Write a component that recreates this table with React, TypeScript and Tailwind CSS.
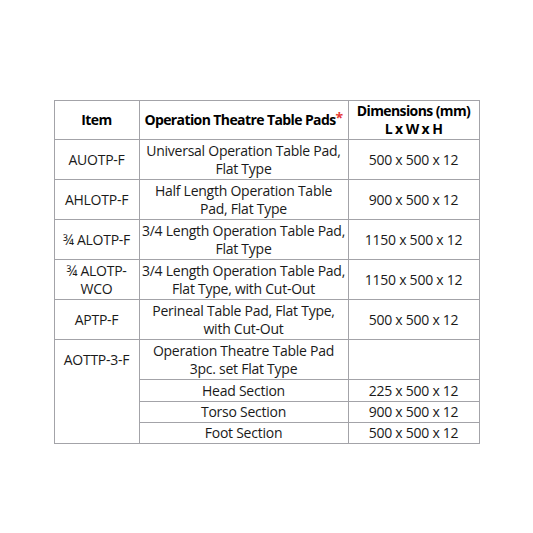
import React from 'react'

type Row = { item?: string; itemSpan?: number; desc: string[]; dim: string; h: number }

const rows: Row[] = [
  { item: 'AUOTP-F', desc: ['Universal Operation Table Pad,', 'Flat Type'], dim: '500 x 500 x 12', h: 40 },
  { item: 'AHLOTP-F', desc: ['Half Length Operation Table', 'Pad, Flat Type'], dim: '900 x 500 x 12', h: 40 },
  { item: '¾ ALOTP-F', desc: ['3/4 Length Operation Table Pad,', 'Flat Type'], dim: '1150 x 500 x 12', h: 40 },
  { item: '¾ ALOTP-\nWCO', desc: ['3/4 Length Operation Table Pad,', 'Flat Type, with Cut-Out'], dim: '1150 x 500 x 12', h: 40 },
  { item: 'APTP-F', desc: ['Perineal Table Pad, Flat Type,', 'with Cut-Out'], dim: '500 x 500 x 12', h: 40 },
  { item: 'AOTTP-3-F', itemSpan: 4, desc: ['Operation Theatre Table Pad', '3pc. set Flat Type'], dim: '', h: 40 },
  { desc: ['Head Section'], dim: '225 x 500 x 12', h: 22 },
  { desc: ['Torso Section'], dim: '900 x 500 x 12', h: 21 },
  { desc: ['Foot Section'], dim: '500 x 500 x 12', h: 21 },
]

const cell = 'border border-[#a3a3a8] text-center align-middle p-0 whitespace-nowrap'

export default function App() {
  return (
    <div className="min-h-[533px] w-[533px] bg-white pt-[100px] font-['Open_Sans',sans-serif] text-[#1a1a1a] tracking-[-0.25px]">
      <table className="mx-auto table-fixed border-collapse text-[14px] leading-[18px]">
        <colgroup>
          <col className="w-[85px]" />
          <col className="w-[209px]" />
          <col className="w-[131px]" />
        </colgroup>
        <thead>
          <tr className="h-[39px] font-bold text-black tracking-[-0.6px]">
            <th className={cell}>Item</th>
            <th className={cell}>
              Operation Theatre Table Pads<span className="relative -top-[2px] text-[#e53935]">*</span>
            </th>
            <th className={cell}>
              Dimensions (mm)
              <br />L x W x H
            </th>
          </tr>
        </thead>
        <tbody>
          {rows.map((r, i) => (
            <tr key={i} style={{ height: r.h }}>
              {r.item !== undefined && (
                <td
                  rowSpan={r.itemSpan}
                  className={`${cell} whitespace-pre-line ${r.itemSpan ? '!align-top pt-[11px]' : ''}`}
                >
                  {r.item}
                </td>
              )}
              <td className={cell}>
                {r.desc.map((d, j) => (
                  <div key={j}>{d}</div>
                ))}
              </td>
              <td className={cell}>{r.dim}</td>
            </tr>
          ))}
        </tbody>
      </table>
    </div>
  )
}
